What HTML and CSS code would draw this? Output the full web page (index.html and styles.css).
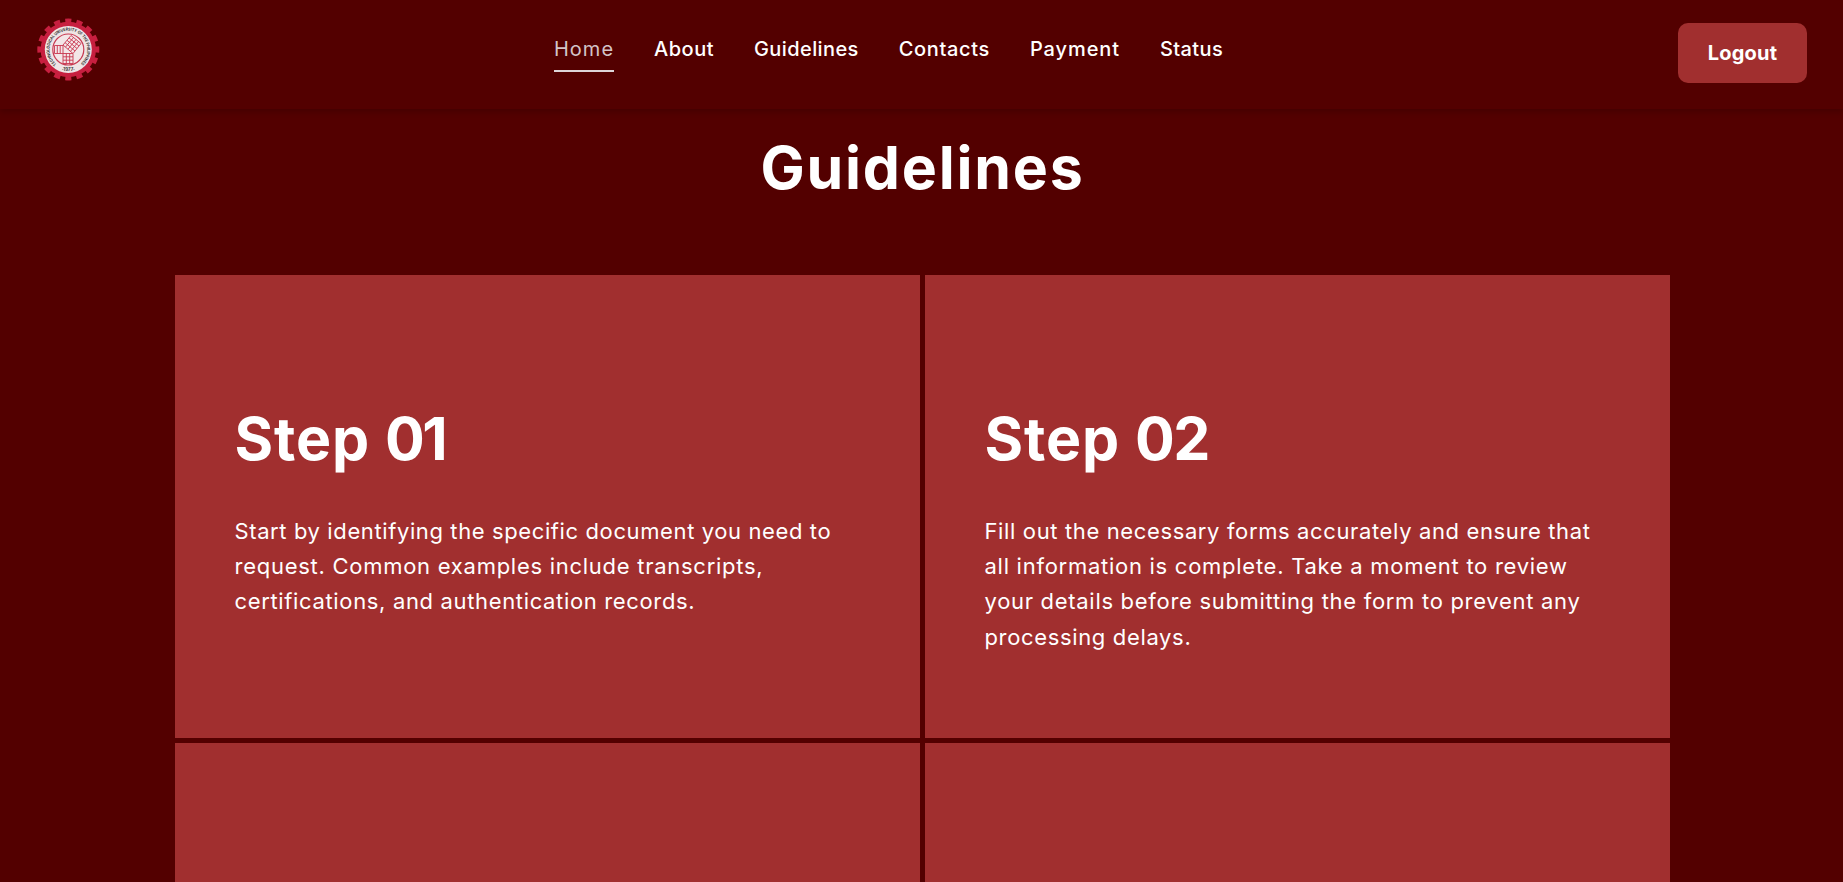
FILE: index.html
```
<!DOCTYPE html>
<html lang="en">
<head>
<meta charset="utf-8">
<title>Guidelines</title>
<link rel="stylesheet" href="styles.css">
</head>
<body>
<header class="header">
  <svg class="logo" viewBox="0 0 63 63" aria-label="Technological University of the Philippines">
    <circle cx="31.3" cy="31.5" r="28.5" class="teeth" pathLength="160"/>
    <circle cx="31.3" cy="31.5" r="27.7" class="gear"/>
    <circle cx="31.3" cy="31.5" r="23.5" class="plate"/>
    <circle cx="31.3" cy="31.5" r="15.5" class="ring"/>
    <path id="arc" d="M19.5 46.1A18.8 18.8 0 1 1 43.1 46.1" fill="none"/>
    <text class="seal-text"><textPath href="#arc" textLength="91" lengthAdjust="spacingAndGlyphs">TECHNOLOGICAL UNIVERSITY OF THE PHILIPPINES</textPath></text>
    <text class="seal-year" x="31.3" y="52.5" text-anchor="middle">·1977·</text>
    <g class="grid">
      <path d="M26 35.5h10v10h-10zM29.3 35.5v10M32.7 35.5v10M26 38.8h10M26 42.2h10"/>
      <path d="M17.5 27.5h8.5v8h-8.5zM20.3 27.5v8M23.2 27.5v8"/>
      <path d="M26 27l8-9.5 10 8-8 10zM28 24.6l10 8.4M30 22.3l10 8.2M32 19.9l10 8.1M28.5 29.1l8-9.6M31 31.2l8-9.7M33.5 33.4l8-9.9"/>
    </g>
  </svg>
  <nav class="nav">
    <a class="link home active">Home</a>
    <a class="link about">About</a>
    <a class="link guides">Guidelines</a>
    <a class="link contacts">Contacts</a>
    <a class="link payment">Payment</a>
    <a class="link status">Status</a>
  </nav>
  <button class="logout">Logout</button>
</header>
<main class="main">
  <h1 class="title">Guidelines</h1>
  <section class="steps">
    <article class="card">
      <h2 class="step">Step <span class="number one">01</span></h2>
      <p class="copy">
        <span class="line t61">Start by identifying the specific document you need to</span>
        <span class="line t73">request. Common examples include transcripts,</span>
        <span class="line t65">certifications, and authentication records.</span>
      </p>
    </article>
    <article class="card">
      <h2 class="step">Step <span class="number">02</span></h2>
      <p class="copy">
        <span class="line t63">Fill out the necessary forms accurately and ensure that</span>
        <span class="line t73">all information is complete. Take a moment to review</span>
        <span class="line t70">your details before submitting the form to prevent any</span>
        <span class="line t65">processing delays.</span>
      </p>
    </article>
    <article class="card"></article>
    <article class="card"></article>
  </section>
</main>
</body>
</html>
```
FILE: styles.css
```
* { box-sizing: border-box; margin: 0; }

body {
  height: 882px;
  overflow: hidden;
  background: #530000;
  color: #fff;
  font-family: Inter, "Open Sans", sans-serif;
}

.header {
  position: relative;
  display: grid;
  grid-template-columns: 517px 1fr auto;
  align-items: start;
  height: 109px;
  padding: 18px 36px 0 37px;
  box-shadow: 0 3px 6px rgba(0, 0, 0, .17);
  background: #530000;
}

.logo { width: 63px; height: 63px; }
.teeth { fill: none; stroke: #c71f3f; stroke-width: 5; stroke-dasharray: 5.4 4.6; stroke-dashoffset: 2.7; }
.gear { fill: #c71f3f; }
.plate { fill: #eee4e5; }
.ring { fill: #f3e6e8; stroke: #c83a52; stroke-width: 1.2; }
.grid { fill: #f3e6e8; stroke: #c8364f; stroke-width: .9; }
.seal-text { font-size: 4.2px; font-weight: 700; fill: #333; }
.seal-year { font-size: 4.4px; font-weight: 700; fill: #333; }

.nav { display: flex; gap: 40px; padding-top: 16px; }
.link {
  padding-bottom: 6px;
  border-bottom: 2px solid transparent;
  font-size: 20px;
  font-weight: 500;
  line-height: 30px;
}
.active { color: #d3c4c8; border-color: #ddd5d8; font-weight: 400; }
.home { letter-spacing: 1px; }
.about { letter-spacing: .5px; }
.guides { letter-spacing: .4px; }
.contacts { letter-spacing: .65px; }
.payment { letter-spacing: .9px; }
.status { letter-spacing: .4px; }

.logout {
  width: 129px;
  height: 60px;
  margin-top: 5px;
  padding: 0;
  border: 0;
  border-radius: 10px;
  background: #a12f2f;
  color: #fff;
  font: 700 20px Inter, sans-serif;
  letter-spacing: .2px;
}

.main { padding: 24px 173px 0 175px; }
.title {
  height: 142px;
  font-size: 59px;
  font-weight: 700;
  line-height: 70px;
  letter-spacing: 1.8px;
  text-align: center;
}
.steps { display: grid; grid-template-columns: 1fr 1fr; grid-auto-rows: 463px; gap: 5px; }
.card { padding: 129px 60px 0 59.5px; background: #a12f2f; }
.step { font-size: 59px; font-weight: 700; line-height: 70px; letter-spacing: .9px; }
.number { letter-spacing: -1.5px; }
.one { letter-spacing: -2.5px; }
.copy { padding-top: 40px; font-size: 22px; line-height: 35.2px; }
.line { display: block; white-space: nowrap; }
.t61 { letter-spacing: .61px; }
.t63 { letter-spacing: .63px; }
.t65 { letter-spacing: .65px; }
.t70 { letter-spacing: .7px; }
.t73 { letter-spacing: .73px; }
```
